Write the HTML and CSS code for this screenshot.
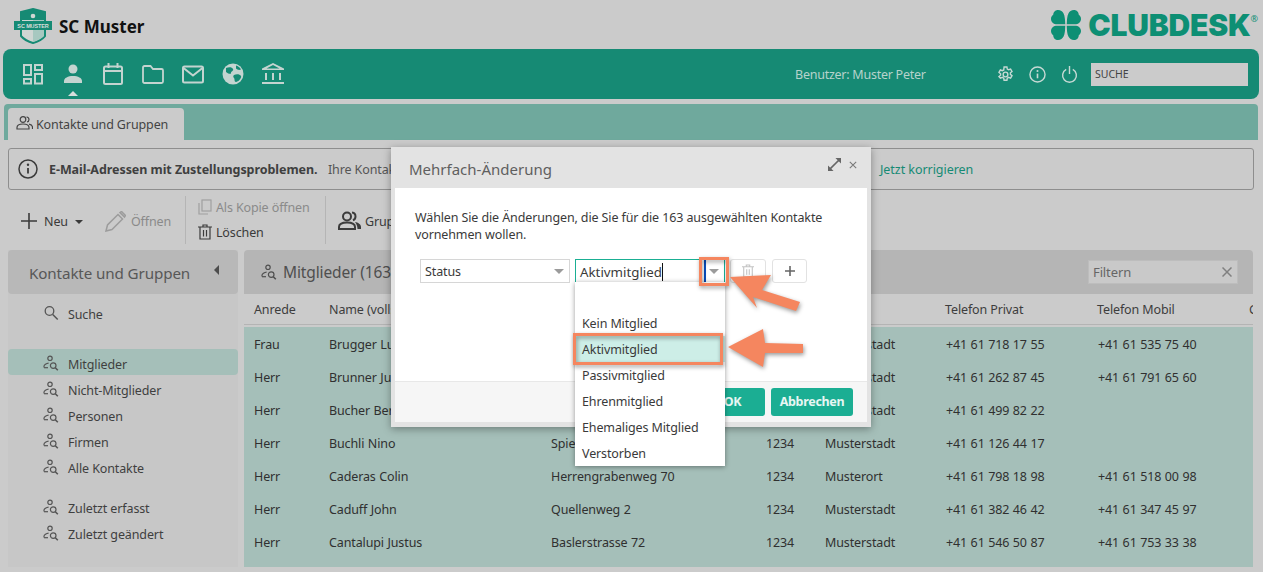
FILE: index.html
```html
<!DOCTYPE html>
<html lang="de">
<head>
<meta charset="utf-8">
<title>SC Muster</title>
<link rel="stylesheet" href="styles.css">
</head>
<body>
<svg class="defs" width="0" height="0" aria-hidden="true">
  <symbol id="i-psearch" viewBox="0 0 16 16">
    <g fill="none" stroke="currentColor" stroke-width="1.2">
      <circle cx="7" cy="3.3" r="2.2"/>
      <path d="M1 12.5v-1.2c0-1.4 2.3-3 4.6-3.2"/>
      <path d="M1 12.7h4"/>
      <circle cx="10.2" cy="10.6" r="2.8"/>
      <path d="M12.3 12.7l2.5 2.5" stroke-width="1.6"/>
    </g>
  </symbol>
  <symbol id="i-leaf" viewBox="0 0 15 15">
    <path d="M15 15H6.500C2.500 15 0 12.300 0 9.300 0 7.300 1 5.800 2.300 5 2.300 2.300 4.300 0 7.300 0 10 0 12 1.500 13 3.500 14.300 6 14.500 10 15 15z"/>
  </symbol>
</svg>
<div class="page">
  <header class="top">
    <div class="brand">
      <svg class="crest" viewBox="0 0 38 36">
        <path d="M19 1l12 3v24c-3 3.500-8 6-12 7-4-1-9-3.500-12-7V4z" fill="#cfd6d3" stroke="#168a74" stroke-width="2"/>
        <path d="M19 2v32c4-1 9-3.500 11-6V5z" fill="#a7c8c0"/>
        <path d="M7 4l12-3 12 3v8H7z" fill="#168a74"/>
        <rect x="0" y="13" width="38" height="9" fill="#168a74"/>
        <text x="19" y="20" class="crest-text" text-anchor="middle">SC MUSTER</text>
        <circle cx="19" cy="8" r="2.300" fill="#cfd6d3"/>
      </svg>
      <span class="club-name">SC Muster</span>
    </div>
    <div class="cd-logo">
      <svg class="clover" viewBox="0 0 31 31">
        <g fill="#0d8f74">
          <use href="#i-leaf" x="0" y="0" width="15" height="15"/>
          <use href="#i-leaf" width="15" height="15" transform="matrix(-1 0 0 1 31 0)"/>
          <use href="#i-leaf" width="15" height="15" transform="matrix(1 0 0 -1 0 31)"/>
          <use href="#i-leaf" width="15" height="15" transform="matrix(-1 0 0 -1 31 31)"/>
        </g>
      </svg>
      <span class="cd-word">CLUBDESK</span><span class="cd-reg">®</span>
    </div>
  </header>

  <nav class="navbar">
    <div class="nav-icons">
      <svg class="nav-ico" viewBox="0 0 22 22"><g fill="none" stroke="currentColor" stroke-width="2"><rect x="2" y="2" width="7" height="10"/><rect x="13" y="2" width="7" height="5"/><rect x="2" y="16" width="7" height="4.500"/><rect x="13" y="11" width="7" height="9.500"/></g></svg>
      <div class="nav-active">
        <svg class="nav-ico" viewBox="0 0 22 22"><circle cx="11" cy="6" r="4.500" fill="currentColor"/><path d="M2 20v-2c0-3 4-5 9-5s9 2 9 5v2z" fill="currentColor"/></svg>
        <span class="nav-caret"></span>
      </div>
      <svg class="nav-ico" viewBox="0 0 22 22"><g fill="none" stroke="currentColor" stroke-width="2"><rect x="2" y="3.500" width="18" height="17.500" rx="1.500"/><path d="M2 8h18M6.500 0v5M15.500 0v5"/></g></svg>
      <svg class="nav-ico" viewBox="0 0 22 22"><path d="M1 18.500v-14c0-1 .6-1.500 1.500-1.500h6l2.500 3h8.500c1 0 1.500 .6 1.500 1.500v11c0 1-.6 1.500-1.500 1.500h-17C1.600 20 1 19.500 1 18.500z" fill="none" stroke="currentColor" stroke-width="1.800"/></svg>
      <svg class="nav-ico" viewBox="0 0 22 22"><g fill="none" stroke="currentColor" stroke-width="2"><rect x="1" y="3.500" width="20" height="16" rx="1.500"/><path d="M1.500 5l9.500 7.500L20.500 5"/></g></svg>
      <svg class="nav-ico" viewBox="0 0 22 22"><circle cx="11" cy="11" r="10.500" fill="currentColor"/><path d="M4 5c3-1 6-1 7 1s-2 2-2 4-4 0-5-1zM12 12c2-1 6-1 7 1s-3 6-5 6-1-3-2-4-1-2 0-3zM14 2.500c2 .5 4 2 5 4-2 1-4 0-5-1z" fill="#168a74"/></svg>
      <svg class="nav-ico" viewBox="0 0 22 22"><g fill="currentColor"><path d="M11 0L22 5.500v1.500H0V5.500zM11 2L4.500 5.500h13z" fill-rule="evenodd"/><rect x="3" y="10" width="2" height="7"/><rect x="10" y="10" width="2" height="7"/><rect x="17" y="10" width="2" height="7"/><rect y="19" width="22" height="2"/></g></svg>
    </div>
    <span class="nav-user">Benutzer: Muster Peter</span>
    <div class="nav-tools">
      <svg class="tool-ico" viewBox="0 0 18 18"><g fill="none" stroke="currentColor" stroke-width="1.500"><path d="M7.500 1h3l.4 2.200 1.400.8 2.100-.8 1.500 2.600-1.700 1.400v1.600l1.700 1.400-1.500 2.600-2.100-.8-1.400.8-.4 2.200h-3l-.4-2.200-1.400-.8-2.100.8L2.100 11.200l1.700-1.400V8.200L2.100 6.800l1.500-2.600 2.100.8 1.400-.8z"/><circle cx="9" cy="9" r="2.500"/></g></svg>
      <svg class="tool-ico" viewBox="0 0 18 18"><circle cx="9" cy="9" r="8" fill="none" stroke="currentColor" stroke-width="1.500"/><path d="M9 8v5" stroke="currentColor" stroke-width="1.700"/><circle cx="9" cy="5.300" r="1.100" fill="currentColor"/></svg>
      <svg class="tool-ico" viewBox="0 0 18 18"><g fill="none" stroke="currentColor" stroke-width="1.500"><path d="M5.500 3.500a7.300 7.300 0 1 0 7 0"/><path d="M9 0v8.500"/></g></svg>
    </div>
    <div class="nav-search">SUCHE</div>
  </nav>

  <div class="tabbar">
    <div class="tab">
      <svg class="tab-ico" viewBox="0 0 17 14"><g fill="none" stroke="currentColor" stroke-width="1.200"><circle cx="7" cy="3.500" r="2.800"/><path d="M1 13v-1.500C1 9.500 3.500 8 7 8s6 1.500 6 3.500V13z"/><path d="M10.500 1c1.500.2 2.500 1.200 2.500 2.500s-1 2.300-2 2.500M13 8.200c2 .4 3.500 1.600 3.500 3.300V13"/></g></svg>
      <span>Kontakte und Gruppen</span>
    </div>
  </div>

  <div class="notice">
    <svg class="notice-ico" viewBox="0 0 20 20"><circle cx="10" cy="10" r="9" fill="none" stroke="#3b3b3b" stroke-width="1.500"/><path d="M10 9v5.500" stroke="#3b3b3b" stroke-width="1.800"/><circle cx="10" cy="5.800" r="1.200" fill="#3b3b3b"/></svg>
    <strong class="notice-title">E-Mail-Adressen mit Zustellungsproblemen.</strong>
    <span class="notice-text">Ihre Kontakte enthalten ungültige Adressen.</span>
    <span class="notice-link">Jetzt korrigieren</span>
  </div>

  <div class="toolbar">
    <div class="tb-btn">
      <svg class="plus" viewBox="0 0 16 16"><path d="M8 0v16M0 8h16" stroke="#3b3b3b" stroke-width="1.600"/></svg>
      <span>Neu</span><span class="tb-caret"></span>
    </div>
    <div class="tb-btn tb-off tb-open">
      <svg class="pencil" viewBox="0 0 21 21"><path d="M1 20l1.500-6L13 3.500l4.500 4.500L7 18.500zM15 1.500l1.500-1 4 4-1 1.500z" fill="none" stroke="#9c9c9c" stroke-width="1.500"/></svg>
      <span>Öffnen</span>
    </div>
    <div class="tb-stack">
      <div class="tb-line tb-off">
        <svg class="mini" viewBox="0 0 14 16"><g fill="none" stroke="#a0a0a0" stroke-width="1.200"><rect x="4" y="1" width="9" height="11"/><path d="M1 4v11h9"/></g></svg>
        <span>Als Kopie öffnen</span>
      </div>
      <div class="tb-line">
        <svg class="mini" viewBox="0 0 14 16"><g fill="none" stroke="#3b3b3b" stroke-width="1.200"><path d="M2 3.500v11.500h10V3.500M0 3h14M5 3V1h4v2M5.500 6v6.500M8.500 6v6.500"/></g></svg>
        <span>Löschen</span>
      </div>
    </div>
    <div class="tb-btn tb-group">
      <svg class="group-ico" viewBox="0 0 25 20"><g fill="none" stroke="#3b3b3b" stroke-width="2"><circle cx="10" cy="5.500" r="4"/><path d="M2 18v-2c0-3 3.500-4.500 8-4.500s8 1.500 8 4.500v2z"/><path d="M15 1.500c2 .3 3.500 2 3.500 4s-1 3.200-2.500 3.800"/></g><path d="M18 11c3 .5 6 2.200 6 5v2h-3.500c0-3-1-5-2.500-7z" fill="#3b3b3b"/></svg>
      <span>Gruppen</span>
    </div>
  </div>

  <main class="content">
    <aside class="side">
      <div class="side-head"><span>Kontakte und Gruppen</span><span class="collapse"></span></div>
      <ul class="side-list s-search">
        <li class="side-item">
          <svg class="side-ico" viewBox="0 0 16 16"><circle cx="6.500" cy="6" r="4.300" fill="none" stroke="currentColor" stroke-width="1.300"/><path d="M9.700 9.500l5 5" stroke="currentColor" stroke-width="1.500"/></svg>
          <span>Suche</span>
        </li>
      </ul>
      <ul class="side-list s-main">
        <li class="side-item is-sel"><svg class="side-ico"><use href="#i-psearch"/></svg><span>Mitglieder</span></li>
        <li class="side-item"><svg class="side-ico"><use href="#i-psearch"/></svg><span>Nicht-Mitglieder</span></li>
        <li class="side-item"><svg class="side-ico"><use href="#i-psearch"/></svg><span>Personen</span></li>
        <li class="side-item"><svg class="side-ico"><use href="#i-psearch"/></svg><span>Firmen</span></li>
        <li class="side-item"><svg class="side-ico"><use href="#i-psearch"/></svg><span>Alle Kontakte</span></li>
      </ul>
      <ul class="side-list s-recent">
        <li class="side-item"><svg class="side-ico"><use href="#i-psearch"/></svg><span>Zuletzt erfasst</span></li>
        <li class="side-item"><svg class="side-ico"><use href="#i-psearch"/></svg><span>Zuletzt geändert</span></li>
      </ul>
    </aside>

    <section class="grid-panel">
      <div class="grid-head">
        <svg class="grid-ico"><use href="#i-psearch"/></svg>
        <span class="grid-title">Mitglieder (163)</span>
        <div class="filter"><span>Filtern</span>
          <svg class="filter-x" viewBox="0 0 10 10"><path d="M.5 .5l9 9M9.500 .5l-9 9" stroke="#808080" stroke-width="1.500"/></svg>
        </div>
      </div>
      <table class="grid">
        <colgroup>
          <col class="c1"><col class="c2"><col class="c3"><col class="c4"><col class="c5"><col class="c6"><col class="c7"><col class="c8">
        </colgroup>
        <thead>
          <tr><th>Anrede</th><th>Name (vollständig)</th><th>Strasse</th><th>PLZ</th><th>Ort</th><th>Telefon Privat</th><th>Telefon Mobil</th><th>G</th></tr>
        </thead>
        <tbody>
          <tr><td>Frau</td><td>Brugger Lucia</td><td>Bahnhofstrasse 12</td><td>1234</td><td>Musterstadt</td><td>+41 61 718 17 55</td><td>+41 61 535 75 40</td><td></td></tr>
          <tr><td>Herr</td><td>Brunner Julian</td><td>Dorfstrasse 8</td><td>1234</td><td>Musterstadt</td><td>+41 61 262 87 45</td><td>+41 61 791 65 60</td><td></td></tr>
          <tr><td>Herr</td><td>Bucher Bernd</td><td>Gartenweg 3</td><td>1234</td><td>Musterstadt</td><td>+41 61 499 82 22</td><td></td><td></td></tr>
          <tr><td>Herr</td><td>Buchli Nino</td><td>Spiegelgasse 5</td><td>1234</td><td>Musterstadt</td><td>+41 61 126 44 17</td><td></td><td></td></tr>
          <tr><td>Herr</td><td>Caderas Colin</td><td>Herrengrabenweg 70</td><td>1234</td><td>Musterort</td><td>+41 61 798 18 98</td><td>+41 61 518 00 98</td><td></td></tr>
          <tr><td>Herr</td><td>Caduff John</td><td>Quellenweg 2</td><td>1234</td><td>Musterstadt</td><td>+41 61 382 46 42</td><td>+41 61 347 45 97</td><td></td></tr>
          <tr><td>Herr</td><td>Cantalupi Justus</td><td>Baslerstrasse 72</td><td>1234</td><td>Musterstadt</td><td>+41 61 546 50 87</td><td>+41 61 753 33 38</td><td></td></tr>
          <tr class="row-rest"><td colspan="8"></td></tr>
        </tbody>
      </table>
    </section>
  </main>

  <div class="modal">
    <div class="modal-head">
      <span class="modal-title">Mehrfach-Änderung</span>
      <svg class="modal-exp" viewBox="0 0 14 14"><path d="M2 12l10-10" fill="none" stroke="#666" stroke-width="1.600"/><path d="M8 0h6v6zM0 8v6h6z" fill="#666"/></svg>
      <svg class="modal-close" viewBox="0 0 10 10"><path d="M1 1l8 8M9 1l-8 8" stroke="#777" stroke-width="1.300"/></svg>
    </div>
    <div class="modal-body">
      <p class="modal-text">Wählen Sie die Änderungen, die Sie für die 163 ausgewählten Kontakte vornehmen wollen.</p>
      <div class="form-row">
        <div class="field"><span>Status</span><span class="f-caret"></span></div>
        <div class="field is-focus"><span>Aktivmitglied</span><span class="cursor"></span><span class="blue-bar"></span><span class="f-caret"></span></div>
        <div class="icon-btn is-off">
          <svg class="trash" viewBox="0 0 14 16"><g fill="none" stroke="#c4c4c4" stroke-width="1.300"><path d="M2 3.500v11.500h10V3.500M0 3h14M5 3V1h4v2M5.500 6v6.500M8.500 6v6.500"/></g></svg>
        </div>
        <div class="icon-btn is-add">
          <svg class="mplus" viewBox="0 0 12 12"><path d="M6 1v10M1 6h10" stroke="#666" stroke-width="1.600"/></svg>
        </div>
      </div>
    </div>
    <div class="modal-foot">
      <span class="btn btn-ok">OK</span>
      <span class="btn">Abbrechen</span>
    </div>
    <ul class="drop">
      <li class="drop-item"></li>
      <li class="drop-item">Kein Mitglied</li>
      <li class="drop-item is-sel">Aktivmitglied</li>
      <li class="drop-item">Passivmitglied</li>
      <li class="drop-item">Ehrenmitglied</li>
      <li class="drop-item">Ehemaliges Mitglied</li>
      <li class="drop-item">Verstorben</li>
    </ul>
  </div>

  <svg class="marks" viewBox="0 0 1263 572" aria-hidden="true">
    <rect x="700.500" y="258.500" width="27" height="26" fill="none" stroke="#f5865f" stroke-width="3"/>
    <rect x="574.500" y="334.500" width="147" height="29" fill="none" stroke="#f5865f" stroke-width="3"/>
    <path d="M730 277L771 275 762 290 800 302 796 311 753 297 757 308z" fill="#f5865f"/>
    <path d="M728 347L763 329 765 343 803 344 803 353 765 353 763 367z" fill="#f5865f"/>
  </svg>
</div>
</body>
</html>
```

FILE: styles.css
```css
* { box-sizing: border-box; }
html, body { margin: 0; padding: 0; }
body {
  width: 1263px;
  height: 572px;
  overflow: hidden;
  background: #cbcbcb;
  font-family: "Noto Sans", "Open Sans", sans-serif;
  font-size: 12.5px;
  letter-spacing: -.12px;
  color: #3a3a3a;
}
ul { list-style: none; margin: 0; padding: 0; }
.defs { position: absolute; }
.page { position: relative; width: 1263px; height: 572px; overflow: hidden; }

/* header */
.top { height: 49px; display: flex; justify-content: space-between; padding: 8px 5px 0 14px; }
.brand { display: flex; align-items: flex-start; gap: 7px; }
.crest { width: 38px; height: 36px; }
.crest-text { font-family: "Liberation Sans", sans-serif; font-size: 5.500px; font-weight: 700; fill: #d8dedc; }
.club-name { font-size: 17px; font-weight: 700; color: #111; line-height: 38px; letter-spacing: 0; }
.cd-logo { display: flex; align-items: flex-start; padding-top: 2px; }
.clover { width: 30px; height: 30px; margin-right: 7px; }
.cd-word { font-family: Inter, sans-serif; font-weight: 900; font-size: 30px; line-height: 30px; color: #0d8f74; letter-spacing: -.2px; }
.cd-reg { font-size: 9px; color: #0d8f74; line-height: 18px; letter-spacing: 0; }

/* nav */
.navbar {
  margin: 0 4px 0 3px;
  height: 50px;
  background: #168a74;
  border-radius: 8px;
  display: flex;
  align-items: center;
  padding-left: 19px;
  color: #b6d3cc;
}
.nav-icons { display: flex; gap: 18px; align-items: center; width: 773px; }
.nav-ico { width: 22px; height: 22px; display: block; color: #c4d4d0; }
.nav-active { position: relative; }
.nav-caret {
  position: absolute; left: 6px; top: 28px;
  border-left: 5px solid transparent; border-right: 5px solid transparent; border-bottom: 5px solid #d6dedb;
}
.nav-user { width: 202px; font-size: 12.5px; letter-spacing: -.25px; }
.nav-tools { display: flex; gap: 15px; width: 94px; color: #c6d9d4; }
.tool-ico { width: 17px; height: 17px; }
.nav-search {
  width: 157px; height: 23px; background: #cbcbcb; color: #444;
  font-size: 10.5px; line-height: 23px; padding-left: 4px; letter-spacing: 0;
}

/* tabs */
.tabbar {
  margin: 5px 5px 0 4px;
  height: 36px;
  background: #6fa99d;
  border-radius: 4px 4px 0 0;
  padding: 4px 0 0 4px;
}
.tab {
  width: 176px; height: 32px; background: #cbcbcb; border-radius: 4px 4px 0 0;
  display: flex; align-items: center; gap: 3px; padding: 1px 0 0 8px;
  font-size: 12.5px; color: #444;
}
.tab-ico { width: 17px; height: 14px; margin-top: -4px; }

/* notice */
.notice {
  margin: 8px 9px 0 8px;
  height: 42px;
  border: 1px solid #8e8e8e;
  border-radius: 3px;
  display: flex;
  align-items: center;
  padding-left: 9px;
}
.notice-ico { width: 20px; height: 20px; margin-right: 11px; flex: none; }
.notice-title { font-weight: 700; font-size: 12.5px; color: #3f3f3f; width: 279px; flex: none; white-space: nowrap; letter-spacing: -.06px; }
.notice-text { width: 552px; flex: none; color: #555; white-space: nowrap; overflow: hidden; }
.notice-link { color: #168a74; letter-spacing: -.05px; }

/* toolbar */
.toolbar { height: 60px; display: flex; align-items: center; padding-left: 21px; }
.tb-btn { display: flex; align-items: center; margin-top: 2px; }
.tb-off { color: #8a8a8a; }
.plus { width: 16px; height: 16px; margin-right: 7px; }
.tb-caret {
  margin-left: 7px; margin-top: 1px;
  border-left: 4px solid transparent; border-right: 4px solid transparent; border-top: 4px solid #3a3a3a;
}
.tb-open { margin-left: 22px; width: 80px; gap: 5px; }
.pencil { width: 21px; height: 21px; }
.tb-stack {
  height: 48px; border-left: 1px solid #b5b5b5; border-right: 1px solid #b5b5b5;
  width: 141px; padding: 0 0 0 12px;
  display: flex; flex-direction: column; gap: 3px;
}
.tb-line { display: flex; align-items: center; gap: 4px; height: 22px; }
.mini { width: 14px; height: 16px; }
.tb-group { margin-left: 11px; gap: 3px; }
.group-ico { width: 25px; height: 20px; }

/* content */
.content { display: flex; gap: 6px; padding: 0 10px 0 8px; height: 317px; }
.side { width: 230px; background: #c7c7c7; flex: none; height: 317px; }
.side-head {
  height: 44px; background: #b8b8b8; border-radius: 4px;
  display: flex; justify-content: space-between; padding: 13px 19px 0 21px;
  font-size: 15.2px; line-height: 20px; color: #575757;
}
.collapse {
  margin-top: 2px; height: 0;
  border-top: 5px solid transparent; border-bottom: 5px solid transparent; border-right: 5px solid #4d4d4d;
}
.side-item {
  height: 26px; display: flex; align-items: center; gap: 9px; padding-left: 35px; border-radius: 4px; color: #3f3f3f;
}
.side-item span { padding-top: 4px; }
.side-item.is-sel { background: #a5bfb9; }
.side-ico { width: 16px; height: 16px; color: #555; flex: none; margin-top: 2px; }
.s-search { padding-top: 5px; }
.s-main { padding-top: 24px; }
.s-recent { padding-top: 14px; }

.grid-panel { flex: 1; min-width: 0; overflow: hidden; }
.grid-head {
  height: 44px; background: #b5b5b5; border-radius: 4px 4px 0 0;
  display: flex; align-items: center; padding: 0 15px 0 17px; color: #4f4f4f;
}
.grid-ico { width: 16px; height: 16px; margin-right: 6px; color: #4f4f4f; }
.grid-title { font-size: 15.5px; flex: 1; }
.filter {
  width: 150px; height: 24px; background: #c9c9c9; border: 1px solid #bdbdbd;
  display: flex; align-items: center; justify-content: space-between; padding: 0 5px 0 4px;
  font-size: 13px; color: #666;
}
.filter-x { width: 10px; height: 10px; }
.grid { border-collapse: separate; border-spacing: 0; table-layout: fixed; width: 1009px; }
.c1 { width: 75px; } .c2 { width: 222px; } .c3 { width: 215px; } .c4 { width: 59px; }
.c5 { width: 120px; } .c6 { width: 152px; } .c7 { width: 152px; } .c8 { width: 14px; }
.grid th {
  height: 31px; font-weight: 400; text-align: left; padding: 0 0 0 10px;
  border-bottom: 1px solid #b4b4b4; color: #3d3d3d; white-space: nowrap; overflow: hidden;
}
.grid td { height: 33px; padding: 0 0 0 10px; background: #a5bfb9; color: #303030; white-space: nowrap; overflow: hidden; word-spacing: .4px; }
.grid tbody tr:first-child td { height: 36px; border-top: 2px solid #cbcbcb; }
.grid td:nth-child(6), .grid td:nth-child(7) { padding-left: 11px; }
.grid .row-rest td { height: 8px; padding: 0; }

/* modal */
.modal {
  position: absolute; left: 391px; top: 147px; width: 480px; height: 280px;
  background: #e3e3e3; padding: 0 4px 5px;
  box-shadow: 0 2px 8px rgba(0,0,0,.35);
  display: flex; flex-direction: column;
}
.modal-head { height: 41px; display: flex; align-items: center; padding: 3px 10px 0 14px; flex: none; }
.modal-title { font-size: 15px; color: #5f5f5f; flex: 1; letter-spacing: 0; }
.modal-exp { width: 13px; height: 13px; margin: -10px 8px 0 0; }
.modal-close { width: 8px; height: 8px; margin: -9px 0 0 0; }
.modal-body { background: #fff; height: 193px; padding: 21px 20px 0; flex: none; }
.modal-text { margin: 0; line-height: 17px; color: #3a3a3a; width: 430px; }
.form-row { display: flex; gap: 5px; margin: 16px 0 0 5px; }
.field {
  width: 150px; height: 24px; border: 1px solid #d6d6d6; position: relative;
  line-height: 24px; padding-left: 4px; color: #3a3a3a; font-size: 12.5px;
}
.field.is-focus { border-color: #1aaf93; font-size: 13.3px; letter-spacing: 0; }
.cursor { display: inline-block; width: 1px; height: 18px; background: #111; vertical-align: -4px; }
.blue-bar { position: absolute; right: 18px; top: 0; width: 2px; height: 22px; background: #0a4fc0; }
.f-caret {
  position: absolute; right: 5px; top: 9px;
  border-left: 5px solid transparent; border-right: 5px solid transparent; border-top: 5px solid #9b9b9b;
}
.icon-btn {
  width: 36px; height: 24px; border: 1px solid #e2e2e2; border-radius: 3px;
  display: flex; align-items: center; justify-content: center;
}
.icon-btn.is-add { width: 35px; margin-left: 1px; }
.trash { width: 12px; height: 14px; }
.mplus { width: 12px; height: 12px; }
.modal-foot {
  height: 41px; background: #f6f6f6; border-top: 1px solid #e8e8e8; flex: none;
  display: flex; justify-content: flex-end; gap: 6px; padding: 6px 14px 0 0;
}
.btn {
  height: 28px; width: 82px; background: #1bae93; color: #e8f6f3; border-radius: 3px;
  font-weight: 700; font-size: 12.5px; line-height: 28px; text-align: center; letter-spacing: -.3px;
}
.btn-ok { width: 75px; padding-left: 10px; }
.drop {
  position: absolute; left: 184px; top: 135px; width: 150px; height: 184px;
  background: #fff; padding-top: 2px;
  box-shadow: 0 1px 5px rgba(0,0,0,.4);
}
.drop-item { height: 26px; line-height: 28px; padding-left: 7px; color: #3a3a3a; font-size: 12.5px; }
.drop-item.is-sel { background: #cdeee7; }

.marks {
  position: absolute; left: 0; top: 0; width: 1263px; height: 572px; pointer-events: none;
  filter: drop-shadow(1px 2px 2px rgba(0,0,0,.4));
}
```
